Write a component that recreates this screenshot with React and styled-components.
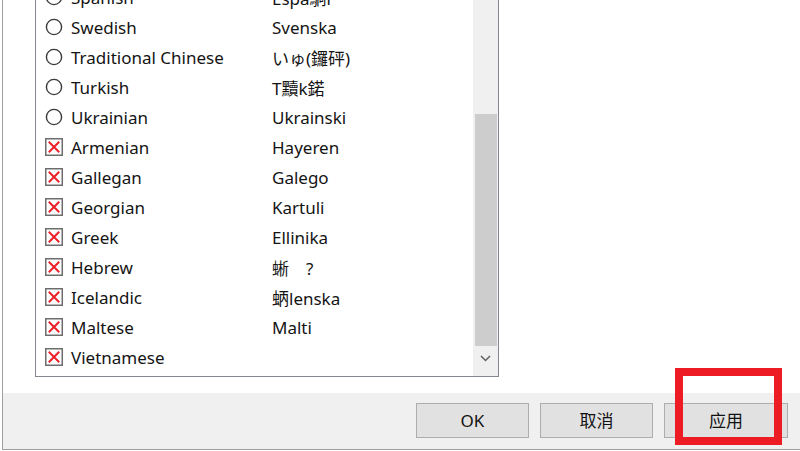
import React from 'react';
import styled, { createGlobalStyle } from 'styled-components';

const Global = createGlobalStyle`
  html, body { margin: 0; padding: 0; background: #fff; }
  body {
    width: 800px; height: 451px; overflow: hidden;
    font-family: "Noto Sans", "Noto Sans CJK SC", sans-serif;
  }
  * { box-sizing: border-box; }
`;

const Window = styled.div`
  position: relative;
  width: 798px;
  height: 450px;
  margin-left: 2px;
  border-left: 1px solid #a0a0a0;
  border-bottom: 1px solid #a0a0a0;
  display: flex;
  flex-direction: column;
  background: #fff;
`;

const Content = styled.div`
  height: 393px;
  flex: none;
  padding-left: 32px;
  overflow: hidden;
  background: #fff;
`;

const ListBox = styled.div`
  width: 464px;
  height: 379px;
  margin-top: -2px;
  border: 1px solid #828790;
  display: flex;
  overflow: hidden;
`;

const Rows = styled.div`
  flex: 1;
  overflow: hidden;
`;

const RowsInner = styled.div`
  margin-top: -17px;
`;

const Row = styled.div`
  height: 30px;
  display: flex;
  align-items: center;
  padding-left: 9px;
  font-size: 17px;
  color: #141414;
  white-space: nowrap;
`;

const IconBox = styled.span`
  width: 18px;
  height: 18px;
  flex: none;
  display: flex;
  align-items: center;
  justify-content: center;
  margin-right: 8px;
`;

const Name = styled.span`
  width: 201px;
  flex: none;
`;

const Native = styled.span``;

const ScrollBar = styled.div`
  width: 25px;
  flex: none;
  background: #f0f0f0;
  display: flex;
  flex-direction: column;
  align-items: center;
`;

const Track = styled.div`
  flex: 1;
  width: 100%;
  display: flex;
  flex-direction: column;
  justify-content: flex-end;
  align-items: center;
`;

const Thumb = styled.div`
  width: 22px;
  height: 232px;
  background: #cdcdcd;
`;

const ArrowButton = styled.div`
  width: 100%;
  height: 30px;
  flex: none;
  display: flex;
  justify-content: center;
  padding-top: 9px;
`;

const Footer = styled.div`
  flex: 1;
  background: #f0f0f0;
  display: flex;
  justify-content: flex-end;
  align-items: flex-start;
  gap: 11px;
  padding: 10px 12px 0 0;
`;

const Button = styled.button`
  width: ${p => p.$w || 113}px;
  height: 35px;
  background: #e1e1e1;
  border: 1px solid #adadad;
  border-radius: 0;
  font-family: "Noto Sans", "Noto Sans CJK SC", sans-serif;
  font-size: 17px;
  color: #111;
  padding: 0;
  line-height: 1;
`;

const Highlight = styled.div`
  position: absolute;
  left: 672px;
  top: 368px;
  width: 107px;
  height: 77px;
  border: 8px solid #ed1c24;
  pointer-events: none;
`;

const Radio = () => (
  <svg width="18" height="18" viewBox="0 0 18 18">
    <circle cx="9" cy="9" r="7.6" fill="#fff" stroke="#3a3a3a" strokeWidth="1.4" />
  </svg>
);

const Cross = () => (
  <svg width="18" height="18" viewBox="0 0 18 18">
    <rect x="0.75" y="0.75" width="16.5" height="16.5" fill="#fff" stroke="#6d6d6d" strokeWidth="1.5" />
    <path d="M4.5 4.5 L13.5 13.5 M13.5 4.5 L4.5 13.5" stroke="#ec2028" strokeWidth="2" strokeLinecap="square" />
  </svg>
);

const rows = [
  ['radio', 'Spanish', 'Espa駉l'],
  ['radio', 'Swedish', 'Svenska'],
  ['radio', 'Traditional Chinese', 'いゅ(鑼砰)'],
  ['radio', 'Turkish', 'T黷k鍩'],
  ['radio', 'Ukrainian', 'Ukrainski'],
  ['cross', 'Armenian', 'Hayeren'],
  ['cross', 'Gallegan', 'Galego'],
  ['cross', 'Georgian', 'Kartuli'],
  ['cross', 'Greek', 'Ellinika'],
  ['cross', 'Hebrew', '蜥\u3000?'],
  ['cross', 'Icelandic', '蛃lenska'],
  ['cross', 'Maltese', 'Malti'],
  ['cross', 'Vietnamese', ''],
];

export default function App() {
  return (
    <>
      <Global />
      <Window>
        <Content>
          <ListBox>
            <Rows>
              <RowsInner>
                {rows.map(([kind, name, native]) => (
                  <Row key={name}>
                    <IconBox>{kind === 'radio' ? <Radio /> : <Cross />}</IconBox>
                    <Name>{name}</Name>
                    <Native>{native}</Native>
                  </Row>
                ))}
              </RowsInner>
            </Rows>
            <ScrollBar>
              <Track>
                <Thumb />
              </Track>
              <ArrowButton>
                <svg width="11" height="7" viewBox="0 0 11 7">
                  <path d="M1 1 L5.5 5.5 L10 1" fill="none" stroke="#606060" strokeWidth="1.5" />
                </svg>
              </ArrowButton>
            </ScrollBar>
          </ListBox>
        </Content>
        <Footer>
          <Button>OK</Button>
          <Button>取消</Button>
          <Button $w={124}>应用</Button>
        </Footer>
        <Highlight />
      </Window>
    </>
  );
}
